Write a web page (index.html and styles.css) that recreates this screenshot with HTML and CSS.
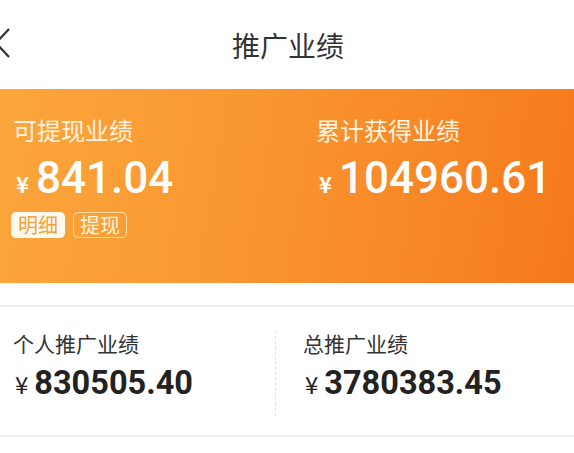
FILE: index.html
```html
<!DOCTYPE html>
<html lang="zh-CN">
<head>
<meta charset="utf-8">
<title>推广业绩</title>
<link rel="stylesheet" href="styles.css">
</head>
<body>
<div class="page">
  <header class="nav">
    <div class="back">
      <svg width="14" height="32" viewBox="0 0 14 32"><polyline points="9,1 -4,15 9,29" fill="none" stroke="#333" stroke-width="2.2"/></svg>
    </div>
    <div class="title">推广业绩</div>
    <div></div>
  </header>
  <section class="banner">
    <div class="col">
      <div class="label">可提现业绩</div>
      <div class="amount"><span class="yen">¥</span><span class="num">841.04</span></div>
      <div class="btns">
        <span class="btn solid">明细</span>
        <span class="btn outline">提现</span>
      </div>
    </div>
    <div class="col right">
      <div class="label">累计获得业绩</div>
      <div class="amount"><span class="yen">¥</span><span class="num">104960.61</span></div>
    </div>
  </section>
  <div class="gap"></div>
  <section class="stats">
    <div class="stat">
      <div class="slabel">个人推广业绩</div>
      <div class="samount"><span class="syen">¥</span><span class="snum">830505.40</span></div>
    </div>
    <div class="divider"></div>
    <div class="stat second">
      <div class="slabel">总推广业绩</div>
      <div class="samount"><span class="syen">¥</span><span class="snum">3780383.45</span></div>
    </div>
  </section>
</div>
</body>
</html>
```
FILE: styles.css
```css
* { box-sizing: border-box; }
html, body { margin: 0; padding: 0; background: #fff; }
body { font-family: "Noto Sans CJK SC", "Noto Sans", sans-serif; }
.page { width: 574px; }

.nav {
  height: 89px;
  display: grid;
  grid-template-columns: 60px 1fr 60px;
  align-items: center;
}
.back { display: flex; align-items: center; height: 32px; margin-top: -1px; }
.back svg { display: block; }
.title {
  text-align: center;
  font-size: 28px;
  line-height: 30px;
  color: #333;
  margin-left: 2px;
}

.banner {
  height: 194px;
  background: linear-gradient(100deg, #fba63c 0%, #f9962f 45%, #f6791c 100%);
  display: flex;
  padding: 29px 0 0 13px;
}
.col { width: 303px; display: flex; flex-direction: column; }
.col.right { width: auto; }
.label {
  font-size: 24px;
  line-height: 24px;
  color: #fff4e2;
}
.amount {
  margin-top: 14px;
  height: 44px;
  display: flex;
  align-items: baseline;
  color: #fff;
}
.yen {
  font-family: "Noto Sans CJK SC", sans-serif;
  font-size: 22px;
  font-weight: 700;
  margin-left: 3px;
  margin-right: 7px;
}
.num {
  font-family: Roboto, "Noto Sans", sans-serif;
  font-weight: 500;
  font-size: 44px;
  line-height: 44px;
}
.btns { margin-top: 12px; display: flex; gap: 8px; margin-left: -2px; }
.btn {
  height: 26px;
  line-height: 24px;
  padding: 0 6px;
  border-radius: 5px;
  font-size: 20px;
  border: 1px solid transparent;
}
.btn.solid { background: #fffaf0; color: #f5a03a; }
.btn.outline { border-color: #ffe0a8; color: #fff4e2; }

.gap { height: 24px; border-bottom: 2px solid #efefef; }

.stats {
  height: 130px;
  display: flex;
  border-bottom: 2px solid #efefef;
  padding-top: 24px;
}
.stat { width: 275px; padding-left: 13px; }
.stat.second { width: 280px; padding-left: 27px; }
.divider {
  width: 0;
  height: 85px;
  border-left: 1px dashed #e2e2e2;
}
.slabel {
  font-size: 21px;
  line-height: 24px;
  color: #333;
}
.samount {
  margin-top: 10px;
  display: flex;
  align-items: baseline;
  color: #222;
}
.syen {
  font-family: "Noto Sans CJK SC", sans-serif;
  font-size: 24px;
  margin-left: 2px;
  margin-right: 6px;
}
.snum {
  font-family: Roboto, "Noto Sans", sans-serif;
  font-weight: 700;
  font-size: 32.5px;
  line-height: 36px;
}
```
